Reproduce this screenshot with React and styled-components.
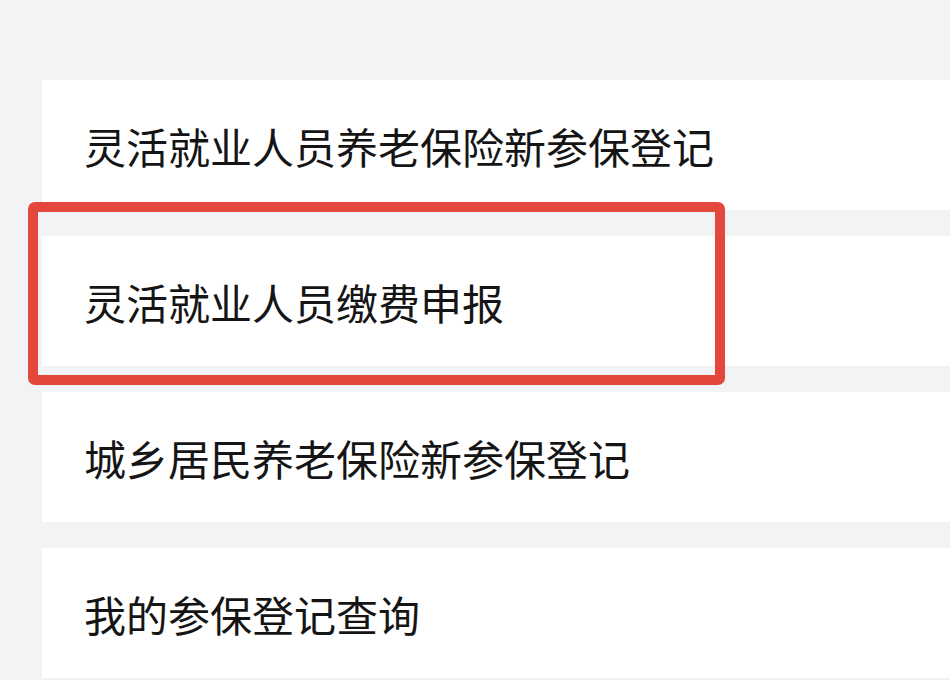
import React from 'react';
import styled, { createGlobalStyle } from 'styled-components';

const GlobalStyle = createGlobalStyle`
  html, body {
    margin: 0;
    padding: 0;
    background: #f2f3f5;
    overflow: hidden;
  }
`;

const Page = styled.div`
  width: 950px;
  height: 680px;
  overflow: hidden;
  background: #f2f3f5;
  padding: 80px 0 0 42px;
  box-sizing: border-box;
  display: flex;
  flex-direction: column;
  gap: 26px;
`;

const Card = styled.div`
  position: relative;
  height: 130px;
  flex-shrink: 0;
  background: #ffffff;
  display: flex;
  align-items: center;
  padding-left: 42px;
  font-family: "Noto Sans CJK SC", "Noto Sans", sans-serif;
  font-size: 42px;
  color: #151515;
  letter-spacing: 0;
`;

const Highlight = styled.div`
  position: absolute;
  left: -14px;
  top: -34px;
  width: 697px;
  height: 183px;
  box-sizing: border-box;
  border: 10px solid #e4473b;
  border-radius: 7px;
  pointer-events: none;
`;

const items = [
  { label: '灵活就业人员养老保险新参保登记' },
  { label: '灵活就业人员缴费申报', marked: true },
  { label: '城乡居民养老保险新参保登记' },
  { label: '我的参保登记查询' },
];

const App = () => {
  return (
    <>
      <GlobalStyle />
      <Page>
        {items.map((item) => (
          <Card key={item.label}>
            {item.label}
            {item.marked && <Highlight />}
          </Card>
        ))}
      </Page>
    </>
  );
};

export default App;
